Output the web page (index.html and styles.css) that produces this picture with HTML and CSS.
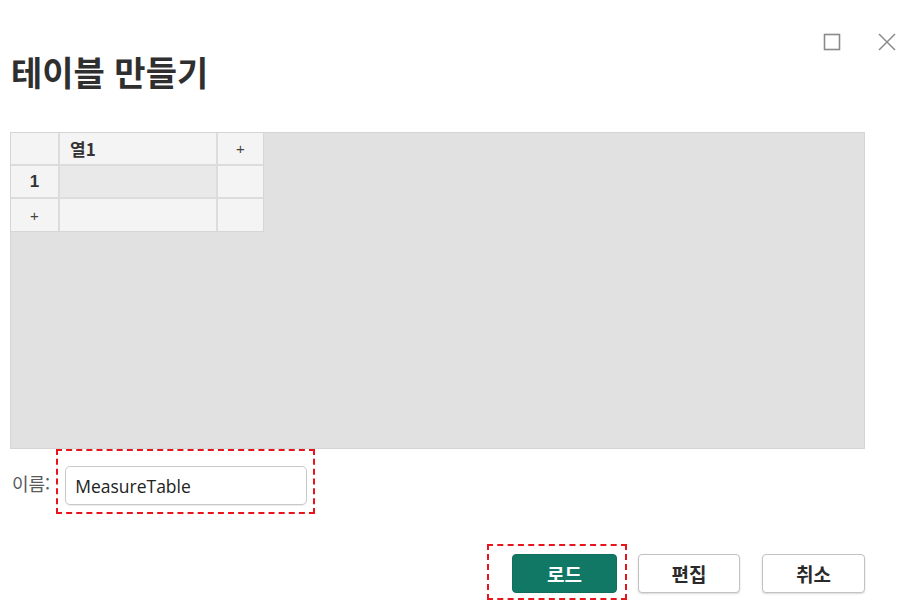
FILE: index.html
```html
<!DOCTYPE html>
<html lang="ko">
<head>
<meta charset="utf-8">
<title>테이블 만들기</title>
<link rel="stylesheet" href="styles.css">
</head>
<body>
<div class="dialog">
  <div class="winctl">
    <svg class="ico" width="18" height="18" viewBox="0 0 18 18"><rect x="1.5" y="1.5" width="15" height="15" fill="none" stroke="#8a8a8a" stroke-width="1.6"/></svg>
    <svg class="ico" width="18" height="18" viewBox="0 0 18 18"><path d="M1 1 L17 17 M17 1 L1 17" stroke="#8a8a8a" stroke-width="1.5" fill="none"/></svg>
  </div>
  <h1 class="title">테이블 만들기</h1>
  <div class="sheet">
    <div class="grid">
      <div class="cell"></div>
      <div class="cell colhead">열1</div>
      <div class="cell plus">+</div>
      <div class="cell rownum">1</div>
      <div class="cell data"></div>
      <div class="cell"></div>
      <div class="cell plus">+</div>
      <div class="cell"></div>
      <div class="cell"></div>
    </div>
  </div>
  <div class="namerow">
    <span class="label">이름:</span>
    <div class="focus focus-name">
      <div class="input">MeasureTable</div>
    </div>
  </div>
  <div class="actions">
    <div class="focus focus-btn">
      <button class="btn primary">로드</button>
    </div>
    <button class="btn edit">편집</button>
    <button class="btn cancel">취소</button>
  </div>
</div>
</body>
</html>
```
FILE: styles.css
```css
html, body {
  margin: 0;
  padding: 0;
  background: #ffffff;
}
body {
  font-family: "Noto Sans CJK KR", "Noto Sans", sans-serif;
  color: #333333;
  width: 908px;
  height: 605px;
  overflow: hidden;
}
.dialog {
  padding: 0 43px 0 10px;
}
.winctl {
  display: flex;
  justify-content: flex-end;
  gap: 37px;
  padding-top: 33px;
  margin-right: -31px;
  height: 18px;
}
.ico {
  display: block;
}
.title {
  margin: 1px 0 0 1px;
  font-size: 34px;
  line-height: 40px;
  font-weight: 700;
  color: #2f2f2f;
  letter-spacing: 0;
}
.sheet {
  margin-top: 40px;
  height: 315px;
  background: #e1e1e1;
  border: 1px solid #d5d5d5;
}
.grid {
  display: grid;
  grid-template-columns: 47px 156px 45px;
  grid-template-rows: 31px 31px 32px;
  gap: 2px;
  width: max-content;
  background: #dcdcdc;
  border-right: 1px solid #d6d6d6;
  border-bottom: 1px solid #d6d6d6;
}
.cell {
  background: #f4f4f4;
  display: flex;
  align-items: center;
  justify-content: center;
  font-family: "Liberation Sans", "Noto Sans CJK KR", sans-serif;
  font-weight: 700;
  font-size: 16px;
  color: #333333;
}
.cell.colhead {
  justify-content: flex-start;
  padding-left: 10px;
  font-family: "Noto Sans CJK KR", sans-serif;
  font-size: 17px;
}
.cell.plus {
  font-size: 15px;
  font-weight: 400;
  color: #444444;
}
.cell.rownum {
  font-size: 17px;
}
.cell.data {
  background: #e9e9e9;
}
.namerow {
  display: flex;
  align-items: center;
  gap: 6px;
  padding-left: 2px;
}
.label {
  font-size: 18px;
  color: #5a5a5a;
  padding-top: 3px;
}
.focus {
  border: 2px dashed #e8141b;
  box-sizing: border-box;
}
.focus-name {
  width: 259px;
  height: 65px;
  padding: 15px 6px 7px 7px;
}
.input {
  box-sizing: border-box;
  height: 39px;
  border: 1px solid #c8c8c8;
  border-radius: 5px;
  box-shadow: 0 1px 1px rgba(0,0,0,0.08);
  padding: 0 9px;
  display: flex;
  align-items: center;
  font-family: "Open Sans", "Noto Sans", sans-serif;
  font-size: 17.5px;
  color: #222222;
}
.actions {
  display: flex;
  justify-content: flex-end;
  align-items: flex-start;
  margin-top: 30px;
}
.focus-btn {
  width: 140px;
  height: 56px;
  padding: 8px 8px 0 23px;
  margin-right: 11px;
}
.btn {
  box-sizing: border-box;
  width: 103px;
  height: 39px;
  border-radius: 4px;
  font-family: "Noto Sans CJK KR", sans-serif;
  font-size: 19px;
  font-weight: 700;
  cursor: pointer;
  padding: 0;
  margin-top: 10px;
}
.btn.primary {
  width: 105px;
  margin-top: 0;
  background: #117865;
  border: 1px solid #0f6e5c;
  color: #ffffff;
}
.btn.edit,
.btn.cancel {
  background: #ffffff;
  border: 1px solid #c2c2c2;
  box-shadow: 0 1px 2px rgba(0,0,0,0.15);
  color: #2a2a2a;
}
.btn.edit {
  width: 102px;
  margin-right: 22px;
}
```
